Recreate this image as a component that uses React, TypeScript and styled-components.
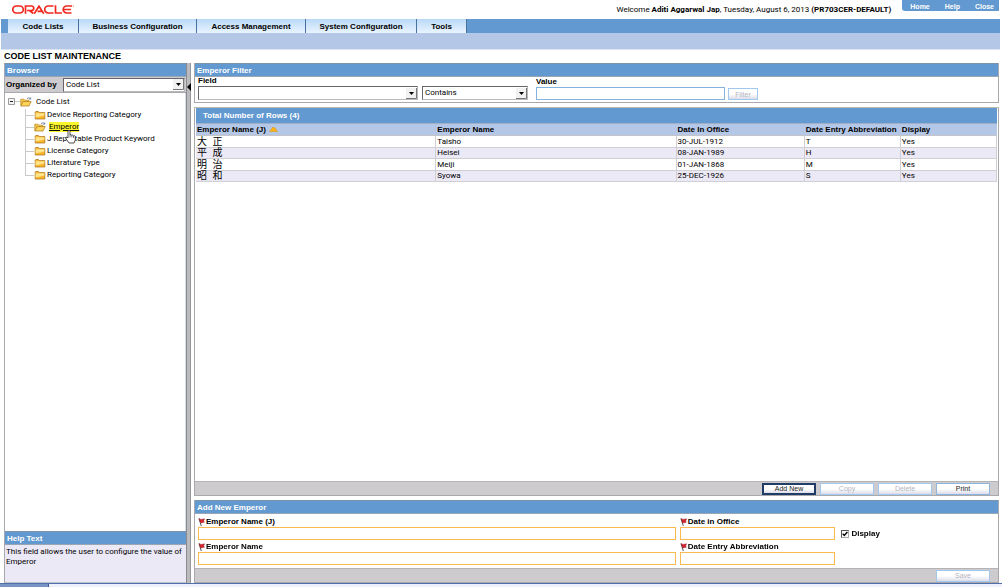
import React, { useState } from "react";
import styled, { createGlobalStyle, css } from "styled-components";

const blue = "#6199d0";
const lavender = "#b5c7e7";
const grey = "#cdcbcd";
const line = "#a9a9ad";
const pale = "#ece9f7";
const boldFont = `"Liberation Sans", Arial, sans-serif`;

const Global = createGlobalStyle`
  * { box-sizing: border-box; }
  body { margin: 0; background: #fff; color: #000; }
  body, button, input, select {
    font-family: Roboto, Arial, "Noto Sans CJK JP", sans-serif;
    font-size: 8px;
    line-height: 10px;
  }
`;

const Page = styled.div`
  min-height: 100vh;
  display: flex;
  flex-direction: column;
`;

const Header = styled.header`
  height: 19px;
  display: flex;
  justify-content: space-between;
  padding: 0 3px 0 12px;
`;

const Logo = styled.svg`
  width: 62px;
  height: 9px;
  margin-top: 5px;
`;

const HeaderRight = styled.div`
  display: flex;
  align-items: flex-start;
  gap: 11px;
`;

const Welcome = styled.p`
  margin: 5px 0 0;
`;

const QuickLinks = styled.nav`
  display: flex;
  height: 11px;
  background: ${blue};
  border-radius: 0 0 0 3px;
  padding: 0 5px 0 8px;
  gap: 15px;
`;

const QuickLink = styled.a`
  color: #fff;
  font-family: ${boldFont};
  font-size: 7px;
  line-height: 13px;
  font-weight: bold;
  text-decoration: none;
`;

const TabBar = styled.nav`
  display: flex;
  height: 14px;
  margin: 0 2px 0 1px;
  padding-left: 7px;
  background: ${blue};
`;

const Tab = styled.a<{ $w: number }>`
  width: ${(p) => p.$w}px;
  border-right: 1px solid #47729f;
  background: linear-gradient(#b9d9f8, #e9f4ff);
  color: #000;
  font-family: ${boldFont};
  font-weight: bold;
  line-height: 15px;
  text-align: center;
  text-decoration: none;
`;

const SubBar = styled.div`
  height: 17px;
  margin: 0 2px 0 1px;
  background: ${lavender};
  border-bottom: 1px solid #dbe3f2;
`;

const Title = styled.h1`
  margin: 0;
  padding: 1px 4px 0;
  height: 13px;
  font-family: ${boldFont};
  font-size: 9px;
  line-height: 11px;
  color: #000;
`;

const Main = styled.main`
  flex: 1;
  display: flex;
  padding: 0 3px 0 4px;
`;

const Sidebar = styled.aside`
  width: 182px;
  display: flex;
  flex-direction: column;
  border-left: 1px solid ${line};
`;

const Splitter = styled.button`
  width: 5px;
  margin-right: 3px;
  padding: 20px 0 0;
  border: 0;
  border-left: 1px solid #8a8a90;
  border-right: 1px solid #98989c;
  background: #bbbabd;
  display: flex;
  align-items: flex-start;
  svg { width: 4px; height: 8px; flex: none; }
`;

const PanelTitle = styled.h2`
  margin: 0;
  height: 14px;
  padding: 0 2px;
  background: ${blue};
  border-top: 1px solid #7d93ab;
  border-bottom: 1px solid #9aa6b4;
  color: #fff;
  font-family: ${boldFont};
  font-size: 8px;
  line-height: 13px;
`;

const Organize = styled.div`
  height: 16px;
  display: flex;
  align-items: center;
  justify-content: space-between;
  background: ${grey};
  padding: 0 1px;
  border-bottom: 1px solid ${line};
`;

const Label = styled.label`
  font-family: ${boldFont};
  font-weight: bold;
  color: #000;
`;

const SelectBox = styled.span<{ $w: number }>`
  display: flex;
  align-items: center;
  position: relative;
  width: ${(p) => p.$w}px;
  svg {
    position: absolute;
    right: 1px;
    width: 11px;
    height: 11px;
    pointer-events: none;
  }
`;

const Select = styled.select`
  appearance: none;
  width: 100%;
  height: 14px;
  padding: 0 12px 0 2px;
  border: 1px solid #b9b9b9;
  border-top-color: #66666a;
  border-left-color: #66666a;
  border-radius: 0;
  background: #fff;
  color: #000;
`;

const Tree = styled.ul`
  flex: 1;
  list-style: none;
  margin: 0;
  padding: 2px 3px;
  border-right: 1px solid #d5dcea;
`;

const Root = styled.div`
  display: flex;
  align-items: center;
  height: 14px;
  gap: 4px;
  svg:first-child { width: 13px; height: 8px; margin-right: -5px; }
`;

const Branch = styled.ul`
  list-style: none;
  margin: 0;
  padding: 0 0 0 17px;
`;

const Leaf = styled.li`
  display: flex;
  align-items: center;
  height: 12px;
  &:not(:last-child) { border-left: 1px solid #c9c9c9; }
  &::before {
    content: "";
    width: 8px;
    border-top: 1px solid #c9c9c9;
  }
  &:last-child::before {
    height: 6px;
    align-self: flex-start;
    border: solid #c9c9c9;
    border-width: 0 0 1px 1px;
  }
`;

const NodeLink = styled.a<{ $active?: boolean }>`
  margin-left: 1px;
  color: #000;
  text-decoration: none;
  ${(p) => p.$active && css`
    margin-left: 3px;
    background: #fbf52c;
    text-decoration: underline;
    position: relative;
    z-index: 1;
  `}
`;

const Hand = styled.svg`
  position: absolute;
  left: 16px;
  top: 7px;
  width: 11px;
  height: 15px;
`;

const FolderSvg = styled.svg`
  width: 12px;
  height: 10px;
  flex: none;
`;

const Help = styled.p`
  margin: 0;
  height: 38px;
  padding: 2px 1px;
  background: ${pale};
  border-bottom: 1px solid #c0c2cc;
`;

const Content = styled.div`
  flex: 1;
  display: flex;
  flex-direction: column;
  gap: 4px;
  min-width: 0;
`;

const Panel = styled.section<{ $grow?: boolean }>`
  display: flex;
  flex-direction: column;
  border: 1px solid ${line};
  border-top: 0;
  ${(p) => p.$grow && css`
    flex: 1;
    border-top: 1px solid #bcbcae;
  `}
`;

const FilterRow = styled.form`
  display: flex;
  align-items: flex-end;
  height: 25px;
  padding: 0 3px 2px;
`;

const Field = styled.div<{ $gap?: number }>`
  display: flex;
  flex-direction: column;
  margin-right: ${(p) => p.$gap ?? 0}px;
`;

const TextInput = styled.input<{ $w?: number; $required?: boolean }>`
  width: ${(p) => (p.$w ? p.$w + "px" : "100%")};
  height: 13px;
  padding: 0 2px;
  border: 1px solid ${(p) => (p.$required ? "#fbb950" : "#86b2de")};
  border-radius: 0;
  background: #fff;
  outline: none;
`;

const Button = styled.button<{ $w: number; $strong?: boolean }>`
  width: ${(p) => p.$w}px;
  height: 12px;
  padding: 0;
  border: 1px solid #8fb5de;
  border-radius: 0;
  background: linear-gradient(#fff 50%, #dcdcea);
  color: #222;
  font-family: ${boldFont};
  font-size: 7px;
  line-height: 9px;
  &:disabled { color: #b4b4c0; border-color: #a3c8ee; }
  ${(p) => p.$strong && css`border: 2px solid #1f3d66; line-height: 7px;`}
`;

const CountBar = styled.h2`
  margin: 0 1px;
  height: 15px;
  padding: 0 7px;
  background: ${blue};
  color: #fff;
  font-family: ${boldFont};
  font-size: 8px;
  line-height: 15px;
`;

const Table = styled.table`
  table-layout: fixed;
  width: calc(100% - 2px);
  margin: 0 1px;
  border-collapse: separate;
  border-spacing: 0;
  border-top: 1px solid #9fb0c8;
`;

const Th = styled.th<{ $w: number }>`
  width: ${(p) => p.$w}%;
  height: 12px;
  padding: 0 1px;
  background: ${lavender};
  border-bottom: 1px solid #c3c3c8;
  text-align: left;
  color: #000;
  font-family: ${boldFont};
  white-space: nowrap;
  svg { width: 9px; height: 5px; margin-left: 3px; }
`;

const Row = styled.tr`
  height: 12px;
  &:nth-child(even) { height: 11px; background: ${pale}; }
`;

const Td = styled.td<{ $kanji?: boolean }>`
  padding: 0 1px;
  border-bottom: 1px solid #cfcfd4;
  border-right: 1px solid #cfcfd4;
  ${(p) => p.$kanji && css`
    font-family: "Liberation Sans", "Noto Sans CJK JP", sans-serif;
    font-size: 10px;
    white-space: pre;
  `}
`;

const Spacer = styled.div`
  flex: 1;
`;

const Footer = styled.div`
  display: flex;
  justify-content: flex-end;
  align-items: center;
  gap: 4px;
  height: 14px;
  padding: 0 8px;
  background: ${grey};
  border-top: 1px solid #b4b4b6;
`;

const AddGrid = styled.form`
  display: grid;
  grid-template-columns: 479fr 156fr 156fr;
  column-gap: 4px;
  row-gap: 1px;
  padding: 2px 3px 3px;
  align-items: end;
`;

const Required = styled(Label)`
  display: flex;
  align-items: center;
  height: 11px;
  gap: 1px;
  svg { width: 7px; height: 8px; }
`;

const Check = styled(Label)`
  display: flex;
  align-items: center;
  gap: 2px;
  padding-left: 2px;
  height: 13px;
`;

const CheckInput = styled.input`
  appearance: none;
  width: 8px;
  height: 8px;
  margin: 0;
  border: 1px solid #aaa;
  border-top-color: #555;
  border-left-color: #555;
  &:checked {
    background: #fff url("data:image/svg+xml,%3Csvg xmlns='http://www.w3.org/2000/svg' viewBox='0 0 6 6'%3E%3Cpath d='M.7 2.6 2.3 4.5 5.4 1' fill='none' stroke='%23000' stroke-width='1.4'/%3E%3C/svg%3E");
  }
`;

const BottomStrip = styled.footer`
  height: 4px;
  border-top: 1px solid #4f6faa;
  background: linear-gradient(to right, #7895c6 48px, #3c5c98 48px, #3c5c98 49px, #eef0fb 49px);
`;

const Arrow = () => (
  <svg viewBox="0 0 11 11" aria-hidden="true">
    <path d="M0 0h11v11H0z" fill="#f1f1f1" />
    <path d="M10.5 0v10.5H0" fill="none" stroke="#77777b" />
    <path d="M3 4h5L5.5 7z" fill="#000" />
  </svg>
);

const Folder = ({ open }: { open?: boolean }) => (
  <FolderSvg viewBox="0 0 12 10" aria-hidden="true">
    {open ? (
      <>
        <path d="M.8 8.5V2.2h3l1 1h4v2" fill="#f5c84c" stroke="#b98419" strokeWidth=".7" />
        <path d="M.8 9 3 4.6h8.2L9 9z" fill="#ffd65c" stroke="#a87413" strokeWidth=".7" />
        <path d="M7 1.8C8.3.4 9.6.7 10.5 1.8M10.7.5v1.6H9.1" fill="none" stroke="#48618c" strokeWidth=".7" />
      </>
    ) : (
      <>
        <path d="M1.2 9V2.2l.6-.7h2.6l.9 1.1h5.5V9z" fill="#fbb52c" stroke="#a06c14" strokeWidth=".7" />
        <path d="M1.6 3.2h8.8v2.2L1.6 7.6z" fill="#ffe48a" />
      </>
    )}
  </FolderSvg>
);

const Flag = () => (
  <svg viewBox="0 0 7 8" aria-hidden="true">
    <path d="M1 .5 3.3 8" stroke="#444" strokeWidth=".9" />
    <path d="M1 .6 3 1.4 6.6.8 5.6 3 6.4 4.2 2.6 5z" fill="#d8222e" stroke="#7d1a20" strokeWidth=".4" />
  </svg>
);

const tabs: [string, number][] = [
  ["Code Lists", 71],
  ["Business Configuration", 118],
  ["Access Management", 109],
  ["System Configuration", 111],
  ["Tools", 50],
];

const folders = [
  "Device Reporting Category",
  "Emperor",
  "J Reportable Product Keyword",
  "License Category",
  "Literature Type",
  "Reporting Category",
];

const rows = [
  ["大  正", "Taisho", "30-JUL-1912", "T", "Yes"],
  ["平  成", "Heisei", "08-JAN-1989", "H", "Yes"],
  ["明  治", "Meiji", "01-JAN-1868", "M", "Yes"],
  ["昭  和", "Syowa", "25-DEC-1926", "S", "Yes"],
];

export default function App() {
  const [display, setDisplay] = useState(true);
  return (
    <Page>
      <Global />
      <Header>
        <Logo viewBox="0 0 62 9" role="img" aria-label="Oracle">
          <g fill="none" stroke="#f0281e" strokeWidth="1.7">
            <rect x=".8" y="1" width="10.5" height="7" rx="3.5" />
            <path d="M13.5 8.7V1h6a2.2 2.2 0 0 1 0 4.5H15M17.5 5.5l3.8 3" />
            <path d="M22.2 8.7 27 1.2 31.8 8.7M25.5 6.4h4.5" />
            <path d="M41.5 1h-5.3a3.5 3.5 0 0 0 0 7H41.5" />
            <path d="M43.5 .3v7.7H50M60 1h-5.3a3.5 3.5 0 0 0 0 7H59.5M52 4.5h7" />
          </g>
          <circle cx="61.3" cy="1" r=".5" fill="#f0281e" />
        </Logo>
        <HeaderRight>
          <Welcome>
            Welcome <b>Aditi Aggarwal Jap</b>, Tuesday, August 6, 2013 <b>(PR703CER-DEFAULT)</b>
          </Welcome>
          <QuickLinks>
            <QuickLink href="#home">Home</QuickLink>
            <QuickLink href="#help">Help</QuickLink>
            <QuickLink href="#close">Close</QuickLink>
          </QuickLinks>
        </HeaderRight>
      </Header>
      <TabBar>
        {tabs.map(([name, w]) => (
          <Tab key={name} href="#tab" $w={w}>{name}</Tab>
        ))}
      </TabBar>
      <SubBar />
      <Title>CODE LIST MAINTENANCE</Title>
      <Main>
        <Sidebar>
          <PanelTitle>Browser</PanelTitle>
          <Organize>
            <Label htmlFor="organize">Organized by</Label>
            <SelectBox $w={122}>
              <Select id="organize"><option>Code List</option></Select>
              <Arrow />
            </SelectBox>
          </Organize>
          <Tree>
            <li>
              <Root>
                <svg viewBox="0 0 13 8" aria-hidden="true">
                  <path d="M.5.5h6v6h-6z" fill="#f4f4f4" stroke="#9a9a9a" />
                  <path d="M2 3.5h3" stroke="#222" />
                  <path d="M7 3.5h6" stroke="#c9c9c9" />
                </svg>
                <Folder open />
                <span>Code List</span>
              </Root>
              <Branch>
                {folders.map((name) => {
                  const active = name === "Emperor";
                  return (
                    <Leaf key={name}>
                      <Folder open={active} />
                      <NodeLink href="#node" $active={active}>
                        {name}
                        {active && (
                          <Hand viewBox="0 0 11 15" aria-hidden="true">
                            <path
                              d="M3 9V1.8q1-1.5 2 0V6q1-1 1.8.3Q8 5.7 8.5 6.8q1.5-.5 1.8.8V11L9 14H4L1 9.8Q.5 8 2 8z"
                              fill="#fff" stroke="#222" strokeWidth=".8"
                            />
                            <path d="M5 6v2.5M6.8 6.5v2M8.5 7v2" stroke="#222" strokeWidth=".6" />
                          </Hand>
                        )}
                      </NodeLink>
                    </Leaf>
                  );
                })}
              </Branch>
            </li>
          </Tree>
          <PanelTitle>Help Text</PanelTitle>
          <Help>This field allows the user to configure the value of Emperor</Help>
        </Sidebar>
        <Splitter aria-label="Collapse browser">
          <svg viewBox="0 0 4 8" aria-hidden="true"><path d="M4 0v8L0 4z" fill="#000" /></svg>
        </Splitter>
        <Content>
          <Panel>
            <PanelTitle>Emperor Filter</PanelTitle>
            <FilterRow>
              <Field $gap={4}>
                <Label htmlFor="field">Field</Label>
                <SelectBox $w={220}>
                  <Select id="field"><option></option></Select>
                  <Arrow />
                </SelectBox>
              </Field>
              <Field $gap={8}>
                <SelectBox $w={106}>
                  <Select aria-label="Condition"><option>Contains</option></Select>
                  <Arrow />
                </SelectBox>
              </Field>
              <Field $gap={3}>
                <Label htmlFor="value">Value</Label>
                <TextInput id="value" $w={189} />
              </Field>
              <Button type="button" $w={30} disabled>Filter</Button>
            </FilterRow>
          </Panel>
          <Panel $grow>
            <CountBar>Total Number of Rows (4)</CountBar>
            <Table>
              <thead>
                <tr>
                  <Th $w={30}>
                    Emperor Name (J)
                    <svg viewBox="0 0 9 5" aria-hidden="true">
                      <path d="M.5 4.6 3.5.4h2L8.5 4.6z" fill="#fdb515" stroke="#d98f13" strokeWidth=".5" />
                    </svg>
                  </Th>
                  <Th $w={30}>Emperor Name</Th>
                  <Th $w={16}>Date In Office</Th>
                  <Th $w={12}>Date Entry Abbreviation</Th>
                  <Th $w={12}>Display</Th>
                </tr>
              </thead>
              <tbody>
                {rows.map((r) => (
                  <Row key={r[1]}>
                    {r.map((cell, i) => (
                      <Td key={i} $kanji={i === 0}>{cell}</Td>
                    ))}
                  </Row>
                ))}
              </tbody>
            </Table>
            <Spacer />
            <Footer>
              <Button type="button" $w={54} $strong>Add New</Button>
              <Button type="button" $w={54} disabled>Copy</Button>
              <Button type="button" $w={54} disabled>Delete</Button>
              <Button type="button" $w={54}>Print</Button>
            </Footer>
          </Panel>
          <Panel>
            <PanelTitle>Add New Emperor</PanelTitle>
            <AddGrid>
              <Field>
                <Required htmlFor="name-j"><Flag />Emperor Name (J)</Required>
                <TextInput id="name-j" $required autoFocus />
              </Field>
              <Field>
                <Required htmlFor="date"><Flag />Date in Office</Required>
                <TextInput id="date" $required />
              </Field>
              <Check>
                <CheckInput type="checkbox" checked={display} onChange={(e) => setDisplay(e.target.checked)} />
                Display
              </Check>
              <Field>
                <Required htmlFor="name"><Flag />Emperor Name</Required>
                <TextInput id="name" $required />
              </Field>
              <Field>
                <Required htmlFor="abbr"><Flag />Date Entry Abbreviation</Required>
                <TextInput id="abbr" $required />
              </Field>
            </AddGrid>
            <Footer>
              <Button type="button" $w={54} disabled>Save</Button>
            </Footer>
          </Panel>
        </Content>
      </Main>
      <BottomStrip />
    </Page>
  );
}
